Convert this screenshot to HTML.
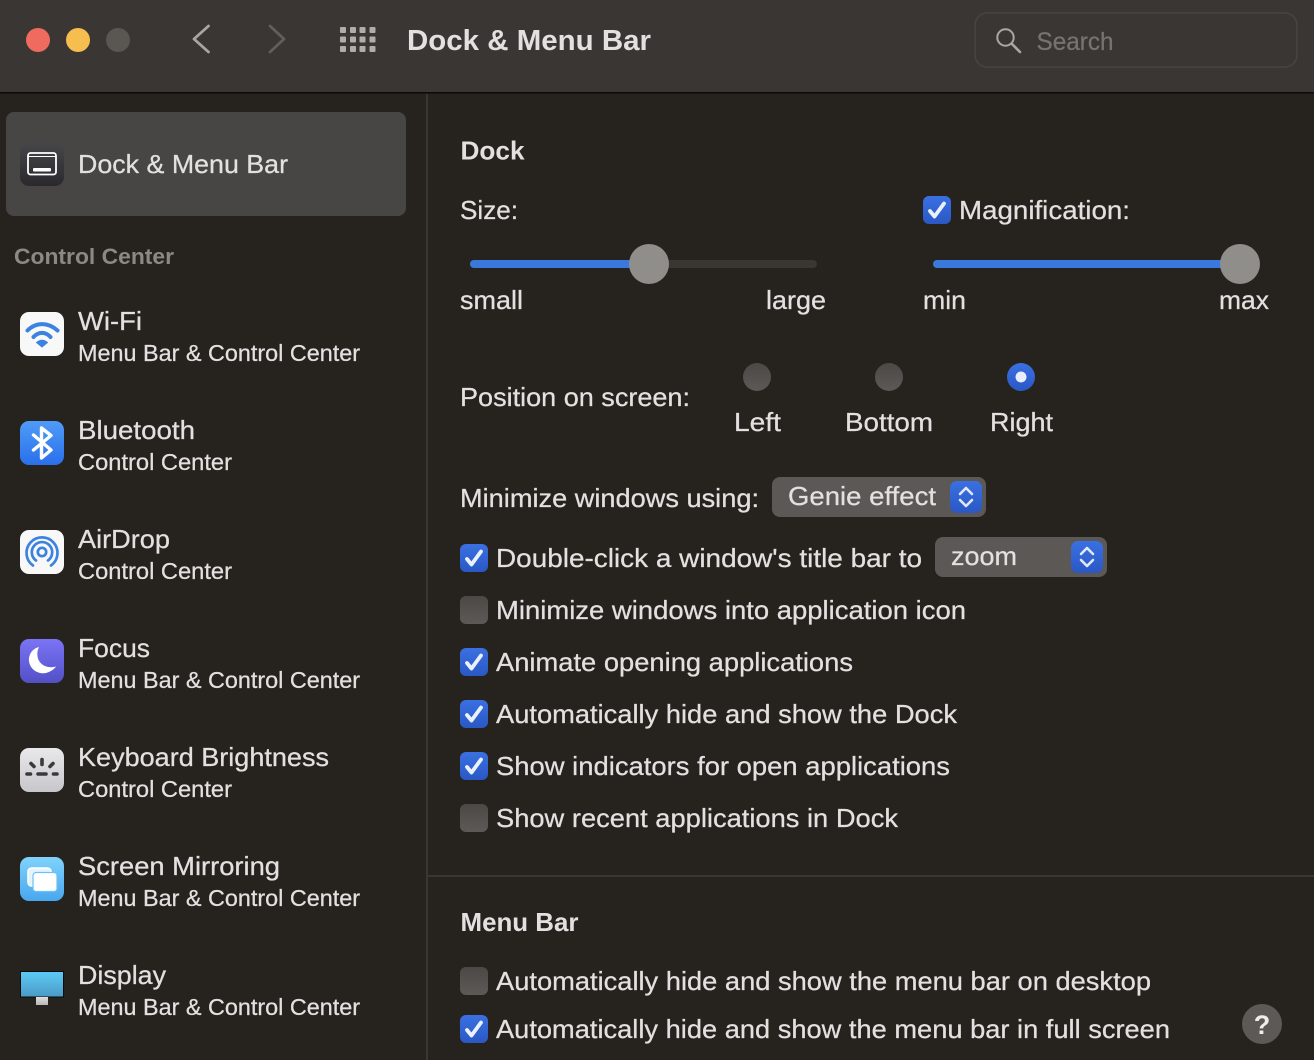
<!DOCTYPE html>
<html><head><meta charset="utf-8"><title>Dock &amp; Menu Bar</title>
<style>
html,body{margin:0;padding:0;background:#26231f;width:1314px;height:1060px;overflow:hidden}
svg{display:block}
text{font-family:"Liberation Sans",sans-serif;fill:#e2e1e0;stroke:#e2e1e0;stroke-width:.25px;font-size:26px}
.s{font-size:23px}
.b{font-weight:bold;stroke-width:0}
</style></head><body>
<svg width="1314" height="1060" viewBox="0 0 1314 1060" xmlns="http://www.w3.org/2000/svg">
<defs>
<linearGradient id="gb" x1="0" y1="0" x2="0" y2="1"><stop offset="0" stop-color="#3a70e2"/><stop offset="1" stop-color="#2a58c4"/></linearGradient>
<linearGradient id="gu" x1="0" y1="0" x2="0" y2="1"><stop offset="0" stop-color="#4b4846"/><stop offset="1" stop-color="#5c5956"/></linearGradient>
<linearGradient id="gd" x1="0" y1="0" x2="0" y2="1"><stop offset="0" stop-color="#47474a"/><stop offset="1" stop-color="#2a2a2e"/></linearGradient>
<linearGradient id="gbt" x1="0" y1="0" x2="0" y2="1"><stop offset="0" stop-color="#4f9bf8"/><stop offset="1" stop-color="#2a70ea"/></linearGradient>
<linearGradient id="gf" x1="0" y1="0" x2="0" y2="1"><stop offset="0" stop-color="#7b74f6"/><stop offset="1" stop-color="#5350c6"/></linearGradient>
<linearGradient id="gk" x1="0" y1="0" x2="0" y2="1"><stop offset="0" stop-color="#e9e9eb"/><stop offset="1" stop-color="#c7c7cb"/></linearGradient>
<linearGradient id="gm" x1="0" y1="0" x2="0" y2="1"><stop offset="0" stop-color="#80d3fb"/><stop offset="1" stop-color="#48a7ee"/></linearGradient>
<linearGradient id="gs" x1="0" y1="0" x2="0" y2="1"><stop offset="0" stop-color="#5ccbf7"/><stop offset="1" stop-color="#4a9ac4"/></linearGradient>
<linearGradient id="gst" x1="0" y1="0" x2="0" y2="1"><stop offset="0" stop-color="#e0e0e0"/><stop offset="1" stop-color="#b8b8b8"/></linearGradient>
<g id="chk"><rect width="28" height="28" rx="6" fill="url(#gb)"/><path d="M7 15 L11.5 20.500 L21 7.500" fill="none" stroke="#eaf0fc" stroke-width="3.800" stroke-linecap="round" stroke-linejoin="round"/></g>
<g id="unc"><rect width="28" height="28" rx="6" fill="url(#gu)"/></g>
<g id="updn"><rect width="32" height="32" rx="7" fill="url(#gb)"/><path d="M10 13 L16 7 L22 13 M10 19 L16 25 L22 19" fill="none" stroke="#dfe8fb" stroke-width="2.600" stroke-linecap="round" stroke-linejoin="round"/></g>
</defs>

<rect width="1314" height="1060" fill="#26231f"/>
<!-- toolbar -->
<rect width="1314" height="92" fill="#3a3633"/>
<rect y="92" width="1314" height="1.5" fill="#0c0b0a"/>
<circle cx="38" cy="40" r="12" fill="#ef6b60"/>
<circle cx="78" cy="40" r="12" fill="#f5be4f"/>
<circle cx="118" cy="40" r="12" fill="#5a5753"/>
<path d="M208.500 26 L194 39 L208.500 52" fill="none" stroke="#a8a5a2" stroke-width="2.800" stroke-linecap="round" stroke-linejoin="round"/>
<path d="M270 26 L284 39 L270 52" fill="none" stroke="#615e5b" stroke-width="2.800" stroke-linecap="round" stroke-linejoin="round"/>
<g fill="#b0adaa">
<rect x="340" y="27" width="6" height="6" rx="1"/><rect x="350" y="27" width="6" height="6" rx="1"/><rect x="359.500" y="27" width="6" height="6" rx="1"/><rect x="369.500" y="27" width="6" height="6" rx="1"/>
<rect x="340" y="36.500" width="6" height="6" rx="1"/><rect x="350" y="36.500" width="6" height="6" rx="1"/><rect x="359.500" y="36.500" width="6" height="6" rx="1"/><rect x="369.500" y="36.500" width="6" height="6" rx="1"/>
<rect x="340" y="46" width="6" height="6" rx="1"/><rect x="350" y="46" width="6" height="6" rx="1"/><rect x="359.500" y="46" width="6" height="6" rx="1"/><rect x="369.500" y="46" width="6" height="6" rx="1"/>
</g>
<text x="407" y="50" class="b" style="font-size:29px" textLength="244" lengthAdjust="spacingAndGlyphs">Dock &amp; Menu Bar</text>
<rect x="975" y="13" width="322" height="54" rx="12" fill="none" stroke="#47433f" stroke-width="1.6"/>
<circle cx="1005.500" cy="37.500" r="8.200" fill="none" stroke="#aaa7a4" stroke-width="2"/>
<path d="M1012 44 L1020 52" stroke="#aaa7a4" stroke-width="2.600" stroke-linecap="round"/>
<text x="1036.500" y="50" style="font-size:25px;fill:#77736f;stroke:#77736f" textLength="77" lengthAdjust="spacingAndGlyphs">Search</text>

<!-- dividers -->
<rect x="426" y="94" width="2" height="966" fill="#3a3733"/>
<rect x="428" y="875" width="886" height="2" fill="#3a3733"/>

<!-- sidebar -->
<rect x="6" y="112" width="400" height="104" rx="8" fill="#474645"/>
<rect x="20" y="142" width="44" height="44" rx="9" fill="url(#gd)"/>
<rect x="28" y="153" width="28" height="21.500" rx="2.500" fill="none" stroke="#fff" stroke-width="1.800"/>
<path d="M28 156.500 H56" stroke="#fff" stroke-width="1"/>
<rect x="33" y="168" width="18" height="3.500" rx="1" fill="#fff"/>
<text x="78" y="173" textLength="210" lengthAdjust="spacingAndGlyphs">Dock &amp; Menu Bar</text>
<text x="14" y="264" class="b" style="font-size:22px;fill:#8b8886" textLength="160" lengthAdjust="spacingAndGlyphs">Control Center</text>

<!-- wifi -->
<rect x="20" y="312" width="44" height="44" rx="9" fill="#f8f8f8"/>
<path d="M27.500 330.500 C36 322 48 322 57.500 330.500" fill="none" stroke="#3c82e0" stroke-width="4" stroke-linecap="round"/>
<path d="M33.500 337 C38.500 331.500 45.500 331.500 50.500 337" fill="none" stroke="#3c82e0" stroke-width="4" stroke-linecap="round"/>
<path d="M42 347 L36.500 342.500 C40 339.500 44 339.500 47.500 342.500 Z" fill="#3c82e0" stroke="#3c82e0" stroke-width="1" stroke-linejoin="round"/>
<text x="78" y="330" textLength="64" lengthAdjust="spacingAndGlyphs">Wi-Fi</text>
<text x="78" y="361" class="s" textLength="282" lengthAdjust="spacingAndGlyphs">Menu Bar &amp; Control Center</text>

<!-- bluetooth -->
<rect x="20" y="421" width="44" height="44" rx="9" fill="url(#gbt)"/>
<path d="M33.500 435 L51 450 L41.500 458 V428 L51 435.500 L33.500 450" fill="none" stroke="#fff" stroke-width="3.400" stroke-linecap="round" stroke-linejoin="round"/>
<text x="78" y="439" textLength="117" lengthAdjust="spacingAndGlyphs">Bluetooth</text>
<text x="78" y="470" class="s" textLength="154" lengthAdjust="spacingAndGlyphs">Control Center</text>

<!-- airdrop -->
<rect x="20" y="530" width="44" height="44" rx="9" fill="#f8f8f8"/>
<g fill="none" stroke="#3c82e0" stroke-width="2.700" stroke-linecap="round">
<path d="M33 565.500 A15.500 15.500 0 1 1 51 565.500"/>
<path d="M36 560.500 A10.200 10.200 0 1 1 48 560.500"/>
<circle cx="42" cy="552" r="4.200"/>
</g>
<text x="78" y="548" textLength="92" lengthAdjust="spacingAndGlyphs">AirDrop</text>
<text x="78" y="579" class="s" textLength="154" lengthAdjust="spacingAndGlyphs">Control Center</text>

<!-- focus -->
<rect x="20" y="639" width="44" height="44" rx="9" fill="url(#gf)"/>
<path d="M39 647 C30.500 649 28.500 657 29 661 C30 670 39 674.500 46 673 C50 672 54 669.500 56 666.500 C47 669 38.500 664.500 37.500 656 C37 653 37.500 650 39 647 Z" fill="#fff"/>
<text x="78" y="657" textLength="72" lengthAdjust="spacingAndGlyphs">Focus</text>
<text x="78" y="688" class="s" textLength="282" lengthAdjust="spacingAndGlyphs">Menu Bar &amp; Control Center</text>

<!-- keyboard -->
<rect x="20" y="748" width="44" height="44" rx="9" fill="url(#gk)"/>
<g stroke="#3a3a3c" stroke-width="3.600" stroke-linecap="round" fill="none">
<path d="M27 774 H30.500 M38 774 H46 M53.500 774 H57"/>
<path d="M42 759.500 V764.500 M31 763.500 L34 766.500 M53 763.500 L50 766.500"/>
</g>
<text x="78" y="766" textLength="251" lengthAdjust="spacingAndGlyphs">Keyboard Brightness</text>
<text x="78" y="797" class="s" textLength="154" lengthAdjust="spacingAndGlyphs">Control Center</text>

<!-- mirroring -->
<rect x="20" y="857" width="44" height="44" rx="9" fill="url(#gm)"/>
<rect x="28" y="868" width="23" height="18" rx="3.500" fill="#e4f5fe" stroke="#fff" stroke-width="1.600"/>
<rect x="33" y="872.500" width="24" height="19" rx="3" fill="#fff" stroke="#6cc0f6" stroke-width="1.200"/>
<text x="78" y="875" textLength="202" lengthAdjust="spacingAndGlyphs">Screen Mirroring</text>
<text x="78" y="906" class="s" textLength="282" lengthAdjust="spacingAndGlyphs">Menu Bar &amp; Control Center</text>

<!-- display -->
<rect x="20.500" y="971.500" width="43" height="25.500" fill="url(#gs)" stroke="#0a0a0a" stroke-width="1"/>
<rect x="36" y="997" width="12" height="8" fill="url(#gst)"/>
<text x="78" y="984" textLength="88" lengthAdjust="spacingAndGlyphs">Display</text>
<text x="78" y="1015" class="s" textLength="282" lengthAdjust="spacingAndGlyphs">Menu Bar &amp; Control Center</text>

<!-- Dock section -->
<text x="460.500" y="159.500" class="b" textLength="64" lengthAdjust="spacingAndGlyphs">Dock</text>
<text x="460" y="219" textLength="58" lengthAdjust="spacingAndGlyphs">Size:</text>
<use href="#chk" x="923" y="196"/>
<text x="959" y="219" textLength="171" lengthAdjust="spacingAndGlyphs">Magnification:</text>

<rect x="470" y="260" width="347" height="8" rx="4" fill="#3a3733"/>
<rect x="470" y="260" width="180" height="8" rx="4" fill="#3a78de"/>
<circle cx="649" cy="264" r="20" fill="#908e8a"/>
<rect x="933" y="260" width="305" height="8" rx="4" fill="#3a78de"/>
<circle cx="1240" cy="264" r="20" fill="#908e8a"/>

<text x="460" y="309" textLength="63" lengthAdjust="spacingAndGlyphs">small</text>
<text x="766" y="309" textLength="60" lengthAdjust="spacingAndGlyphs">large</text>
<text x="923" y="309" textLength="43" lengthAdjust="spacingAndGlyphs">min</text>
<text x="1219" y="309" textLength="50" lengthAdjust="spacingAndGlyphs">max</text>

<text x="460" y="406" textLength="230" lengthAdjust="spacingAndGlyphs">Position on screen:</text>
<circle cx="757" cy="377" r="14" fill="url(#gu)"/>
<circle cx="889" cy="377" r="14" fill="url(#gu)"/>
<circle cx="1021" cy="377" r="14" fill="url(#gb)"/>
<circle cx="1021" cy="377" r="5.500" fill="#e8eefb"/>
<text x="734" y="431" textLength="47" lengthAdjust="spacingAndGlyphs">Left</text>
<text x="845" y="431" textLength="88" lengthAdjust="spacingAndGlyphs">Bottom</text>
<text x="990" y="431" textLength="63" lengthAdjust="spacingAndGlyphs">Right</text>

<text x="460" y="507" textLength="299" lengthAdjust="spacingAndGlyphs">Minimize windows using:</text>
<rect x="772" y="477" width="214" height="40" rx="8" fill="#5b5855"/>
<use href="#updn" x="950" y="481"/>
<text x="788" y="505" textLength="148" lengthAdjust="spacingAndGlyphs">Genie effect</text>

<use href="#chk" x="460" y="544"/>
<text x="496" y="567" textLength="426" lengthAdjust="spacingAndGlyphs">Double-click a window's title bar to</text>
<rect x="935" y="537" width="172" height="40" rx="8" fill="#5b5855"/>
<use href="#updn" x="1071" y="541"/>
<text x="951" y="565" textLength="66" lengthAdjust="spacingAndGlyphs">zoom</text>

<use href="#unc" x="460" y="596"/>
<text x="496" y="619" textLength="470" lengthAdjust="spacingAndGlyphs">Minimize windows into application icon</text>
<use href="#chk" x="460" y="648"/>
<text x="496" y="671" textLength="357" lengthAdjust="spacingAndGlyphs">Animate opening applications</text>
<use href="#chk" x="460" y="700"/>
<text x="496" y="723" textLength="461" lengthAdjust="spacingAndGlyphs">Automatically hide and show the Dock</text>
<use href="#chk" x="460" y="752"/>
<text x="496" y="775" textLength="454" lengthAdjust="spacingAndGlyphs">Show indicators for open applications</text>
<use href="#unc" x="460" y="804"/>
<text x="496" y="827" textLength="402" lengthAdjust="spacingAndGlyphs">Show recent applications in Dock</text>

<!-- Menu bar -->
<text x="460.500" y="931" class="b" textLength="118" lengthAdjust="spacingAndGlyphs">Menu Bar</text>
<use href="#unc" x="460" y="967"/>
<text x="496" y="990" textLength="655" lengthAdjust="spacingAndGlyphs">Automatically hide and show the menu bar on desktop</text>
<use href="#chk" x="460" y="1015"/>
<text x="496" y="1038" textLength="674" lengthAdjust="spacingAndGlyphs">Automatically hide and show the menu bar in full screen</text>

<circle cx="1262" cy="1024" r="20" fill="#5c5956"/>
<text x="1262" y="1034" text-anchor="middle" class="b" style="font-size:27px;fill:#eeedec">?</text>
</svg>
</body></html>
